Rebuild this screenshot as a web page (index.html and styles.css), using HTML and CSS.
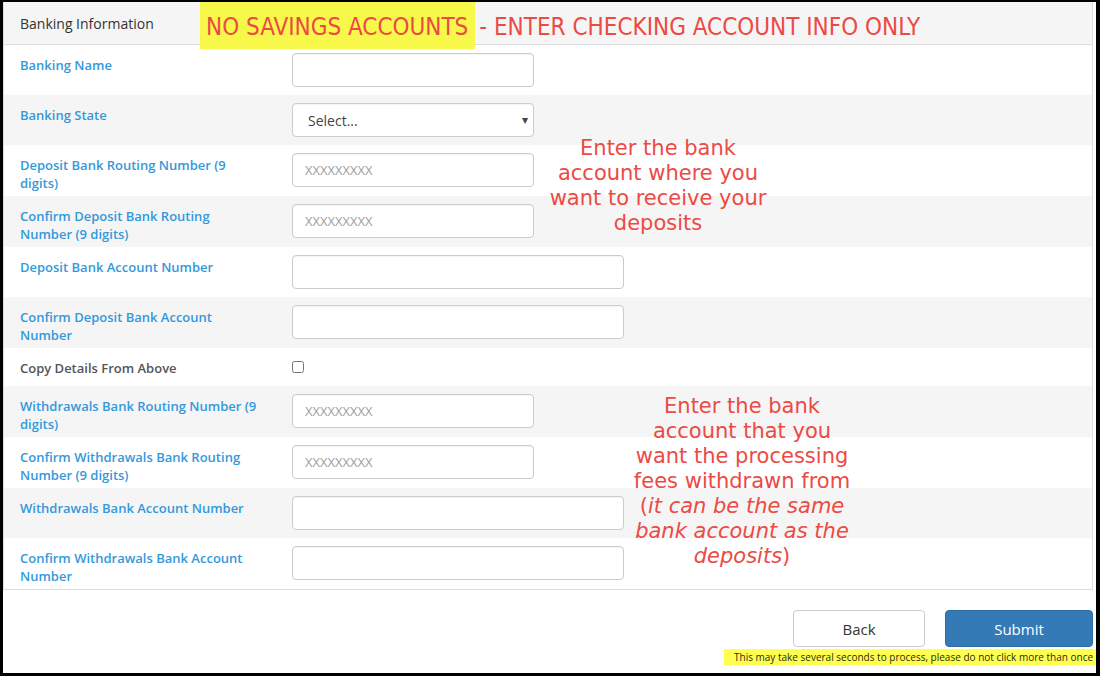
FILE: index.html
```html
<!DOCTYPE html>
<html lang="en">
<head>
<meta charset="utf-8">
<title>Banking Information</title>
<link rel="stylesheet" href="styles.css">
</head>
<body>
<div class="frame">
  <section class="panel">
    <header class="panel-heading">Banking Information</header>

    <div class="form-row">
      <label class="field-label">Banking Name</label>
      <div class="control"><input class="input short" type="text"></div>
    </div>
    <div class="form-row alt">
      <label class="field-label">Banking State</label>
      <div class="control">
        <div class="select-wrap">
          <select class="input short select"><option>Select...</option></select>
        </div>
      </div>
    </div>
    <div class="form-row">
      <label class="field-label">Deposit Bank Routing Number (9 digits)</label>
      <div class="control"><input class="input short" type="text" placeholder="XXXXXXXXX"></div>
    </div>
    <div class="form-row alt">
      <label class="field-label">Confirm Deposit Bank Routing Number (9 digits)</label>
      <div class="control"><input class="input short" type="text" placeholder="XXXXXXXXX"></div>
    </div>
    <div class="form-row">
      <label class="field-label">Deposit Bank Account Number</label>
      <div class="control"><input class="input long" type="text"></div>
    </div>
    <div class="form-row alt">
      <label class="field-label">Confirm Deposit Bank Account Number</label>
      <div class="control"><input class="input long" type="text"></div>
    </div>
    <div class="form-row check-row">
      <label class="field-label plain">Copy Details From Above</label>
      <div class="control"><input class="checkbox" type="checkbox"></div>
    </div>
    <div class="form-row alt">
      <label class="field-label">Withdrawals Bank Routing Number (9 digits)</label>
      <div class="control"><input class="input short" type="text" placeholder="XXXXXXXXX"></div>
    </div>
    <div class="form-row">
      <label class="field-label">Confirm Withdrawals Bank Routing Number (9 digits)</label>
      <div class="control"><input class="input short" type="text" placeholder="XXXXXXXXX"></div>
    </div>
    <div class="form-row alt">
      <label class="field-label">Withdrawals Bank Account Number</label>
      <div class="control"><input class="input long" type="text"></div>
    </div>
    <div class="form-row">
      <label class="field-label">Confirm Withdrawals Bank Account Number</label>
      <div class="control"><input class="input long" type="text"></div>
    </div>
  </section>

  <div class="actions">
    <div class="buttons">
      <button class="btn btn-default" type="button">Back</button>
      <button class="btn btn-primary" type="button">Submit</button>
    </div>
    <p class="wait-note">This may take several seconds to process, please do not click more than once</p>
  </div>

  <div class="notice"><span class="mark">NO SAVINGS ACCOUNTS</span><span class="rest">- ENTER CHECKING ACCOUNT INFO ONLY</span></div>

  <p class="hint hint-deposit">Enter the bank<br>account where you<br>want to receive your<br>deposits</p>
  <p class="hint hint-withdraw">Enter the bank<br>account that you<br>want the processing<br>fees withdrawn from<br>(<em>it can be the same<br>bank account as the<br>deposits</em>)</p>
</div>
</body>
</html>
```
FILE: styles.css
```css
* {
  box-sizing: border-box;
}

html, body {
  margin: 0;
  padding: 0;
  background: #000;
}

body {
  font-family: "Open Sans", "Liberation Sans", sans-serif;
  color: #333;
}

.frame {
  position: relative;
  width: 1100px;
  height: 676px;
  background: #fff;
  border-style: solid;
  border-color: #000;
  border-width: 2px 4px 3px 3px;
  display: flex;
  flex-direction: column;
}

/* panel */
.panel {
  margin-right: 3px;
  border: 1px solid #dddddd;
  border-top: 0;
  background: #fff;
}

.panel-heading {
  height: 43px;
  line-height: 44px;
  padding: 0 16px;
  background: #f5f5f5;
  border-bottom: 1px solid #dddddd;
  font-size: 14px;
  color: #333;
}

.form-row {
  display: flex;
  align-items: flex-start;
  padding: 0 16px;
  background: #fff;
}

.form-row.alt {
  background: #f5f5f5;
}

.field-label {
  width: 272px;
  flex: none;
  padding: 11px 31px 4px 0;
  font-size: 13px;
  line-height: 18px;
  font-weight: 600;
  color: #3399db;
}

.field-label.plain {
  color: #555;
  padding-bottom: 9px;
}

.control {
  padding: 8px 0;
}

.check-row .control {
  padding: 0;
}

.input {
  display: block;
  height: 34px;
  padding: 0 12px;
  font-family: "Open Sans", "Liberation Sans", sans-serif;
  font-size: 13px;
  color: #555;
  background: #fff;
  border: 1px solid #cccccc;
  border-radius: 4px;
  box-shadow: inset 0 1px 1px rgba(0, 0, 0, 0.05);
  outline: none;
}

.input::placeholder {
  color: #a0a0a0;
}

.input.short {
  width: 242px;
}

.input.long {
  width: 332px;
}

.select-wrap {
  position: relative;
}

.select {
  appearance: none;
  -webkit-appearance: none;
  padding-left: 15px;
  font-size: 14px;
  color: #444;
}

.select-wrap::after {
  content: "\25BE";
  position: absolute;
  right: 6px;
  top: 8px;
  font-size: 12px;
  color: #444;
  pointer-events: none;
}

.checkbox {
  display: block;
  width: 12px;
  height: 12px;
  margin: 13px 0 0 0;
}

/* footer */
.actions {
  display: flex;
  flex-direction: column;
  align-items: flex-end;
}

.buttons {
  display: flex;
  gap: 20px;
  margin-top: 20px;
  padding-right: 3px;
}

.btn {
  height: 37px;
  font-family: "Open Sans", "Liberation Sans", sans-serif;
  font-size: 15px;
  border-radius: 4px;
  border: 1px solid #cccccc;
  cursor: pointer;
}

.btn-default {
  width: 132px;
  background: #fff;
  color: #333;
}

.btn-primary {
  width: 148px;
  background: #337ab7;
  border-color: #2e6da4;
  color: #fff;
}

.wait-note {
  margin: 2px 0 0 0;
  width: 372px;
  height: 16px;
  padding: 0 0 0 10px;
  background: #ffff50;
  font-size: 10px;
  line-height: 16px;
  color: #2a2a10;
  white-space: nowrap;
}

/* annotations laid over the form */
.notice {
  position: absolute;
  left: 197px;
  top: 0;
  height: 47px;
  display: flex;
  font-family: "DejaVu Sans Condensed", "DejaVu Sans", sans-serif;
  font-stretch: condensed;
  font-size: 24px;
  color: #ec4a44;
  white-space: nowrap;
}

.notice .mark {
  display: block;
  height: 47px;
  padding: 3px 7px 0 6px;
  line-height: 44px;
  background: #f8f84a;
}

.notice .rest {
  display: block;
  padding: 3px 0 0 4px;
  line-height: 44px;
}

.hint {
  position: absolute;
  margin: 0;
  font-family: "DejaVu Sans", sans-serif;
  font-size: 21px;
  line-height: 25px;
  color: #ec4a44;
  text-align: center;
  white-space: nowrap;
}

.hint em {
  font-style: oblique;
}

.hint-deposit {
  left: 535px;
  top: 134px;
  width: 240px;
}

.hint-withdraw {
  left: 619px;
  top: 392px;
  width: 240px;
}
```
